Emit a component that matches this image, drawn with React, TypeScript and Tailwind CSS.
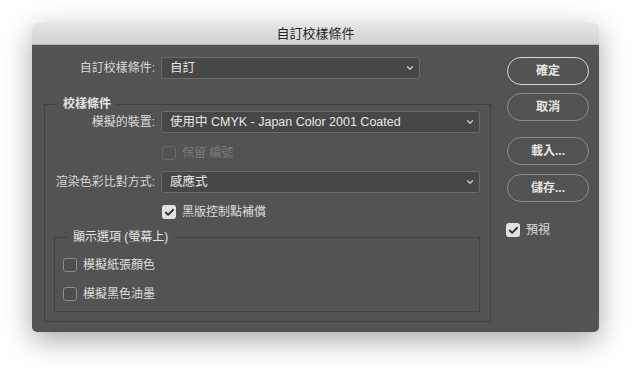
import { ChevronDown, Check } from 'lucide-react'

const font = { fontFamily: '"Liberation Sans", "Noto Sans CJK TC", sans-serif' }

function Select({ value, width }: { value: string; width: string }) {
  return (
    <div
      className={`${width} h-[22px] flex items-center justify-between pl-[8px] pr-[4px] bg-[#474747] border border-[#6a6a6a] rounded-[3px] text-[12.5px] text-[#e8e8e8]`}
    >
      <span>{value}</span>
      <ChevronDown className="w-[10px] h-[10px] text-[#d0d0d0]" strokeWidth={3} />
    </div>
  )
}

function Box({ checked, disabled }: { checked?: boolean; disabled?: boolean }) {
  if (checked) {
    return (
      <div className="w-[14px] h-[14px] rounded-[3px] bg-[#e2e2e2] flex items-center justify-center">
        <Check className="w-[11px] h-[11px] text-[#303030]" strokeWidth={4} />
      </div>
    )
  }
  return (
    <div
      className={`w-[14px] h-[14px] rounded-[3px] border ${disabled ? 'border-[#676767]' : 'border-[#8c8c8c] bg-[#4d4d4d]'}`}
    />
  )
}

function CheckRow({ label, checked, disabled }: { label: string; checked?: boolean; disabled?: boolean }) {
  return (
    <div className="h-[14px] flex items-center gap-[6px]">
      <Box checked={checked} disabled={disabled} />
      <span className={`text-[12px] ${disabled ? 'text-[#7b7b7b]' : 'text-[#dcdcdc]'}`}>{label}</span>
    </div>
  )
}

function Button({ label, primary }: { label: string; primary?: boolean }) {
  return (
    <div
      className={`w-[82px] h-[28px] rounded-full flex items-center justify-center text-[12px] font-bold text-[#e6e6e6] ${
        primary ? 'border-[1.5px] border-[#d6d6d6]' : 'border border-[#8e8e8e]'
      }`}
    >
      {label}
    </div>
  )
}

export default function App() {
  return (
    <div className="w-[634px] h-[381px] bg-white pt-[23px] pl-[32px]" style={font}>
      <div className="w-[567px] h-[309px] rounded-[5px] overflow-hidden flex flex-col shadow-[0_8px_28px_rgba(0,0,0,0.35)]">
        {/* Title bar */}
        <div className="h-[22px] flex items-center justify-center bg-gradient-to-b from-[#e6e6e6] to-[#d2d2d2] border-b border-[#b4b4b4] text-[13px] text-[#262626]">
          自訂校樣條件
        </div>

        {/* Body */}
        <div className="flex-1 bg-[#535353] flex pl-[12px] pt-[12px]">
          {/* Left column */}
          <div className="w-[447px] flex flex-col">
            <div className="flex items-center gap-[6px]">
              <span className="w-[111px] text-right text-[12px] text-[#d8d8d8]">自訂校樣條件:</span>
              <Select value="自訂" width="w-[259px]" />
            </div>

            {/* 校樣條件 */}
            <div className="relative mt-[25px] border border-[#414141] pt-[6px] pr-[10px] pb-[9px] flex flex-col">
              <span className="absolute -top-[9px] left-[12px] px-[6px] bg-[#535353] text-[12px] text-[#e4e4e4] font-bold leading-[17px]">
                校樣條件
              </span>
              <div className="flex items-center gap-[6px]">
                <span className="w-[110px] text-right text-[12px] text-[#d8d8d8]">模擬的裝置:</span>
                <Select value="使用中 CMYK - Japan Color 2001 Coated" width="w-[319px]" />
              </div>
              <div className="mt-[13px] pl-[117px]">
                <CheckRow label="保留  編號" disabled />
              </div>
              <div className="mt-[11px] flex items-center gap-[6px]">
                <span className="w-[110px] text-right text-[12px] text-[#d8d8d8]">渲染色彩比對方式:</span>
                <Select value="感應式" width="w-[319px]" />
              </div>
              <div className="mt-[12px] pl-[117px]">
                <CheckRow label="黑版控制點補償" checked />
              </div>

              {/* 顯示選項 */}
              <div className="relative mt-[18px] ml-[9px] border border-[#414141] pt-[20px] pb-[10px] pl-[8px] flex flex-col gap-[15px]">
                <span className="absolute -top-[9px] left-[12px] px-[6px] bg-[#535353] text-[12px] text-[#e4e4e4] leading-[17px]">
                  顯示選項 (螢幕上)
                </span>
                <CheckRow label="模擬紙張顏色" />
                <CheckRow label="模擬黑色油墨" />
              </div>
            </div>
          </div>

          {/* Right column */}
          <div className="ml-[15px] flex flex-col">
            <div className="ml-[1px]">
              <Button label="確定" primary />
            </div>
            <div className="ml-[1px] mt-[8px]">
              <Button label="取消" />
            </div>
            <div className="ml-[1px] mt-[16px]">
              <Button label="載入..." />
            </div>
            <div className="ml-[1px] mt-[9px]">
              <Button label="儲存..." />
            </div>
            <div className="mt-[21px]">
              <CheckRow label="預視" checked />
            </div>
          </div>
        </div>
      </div>
    </div>
  )
}
